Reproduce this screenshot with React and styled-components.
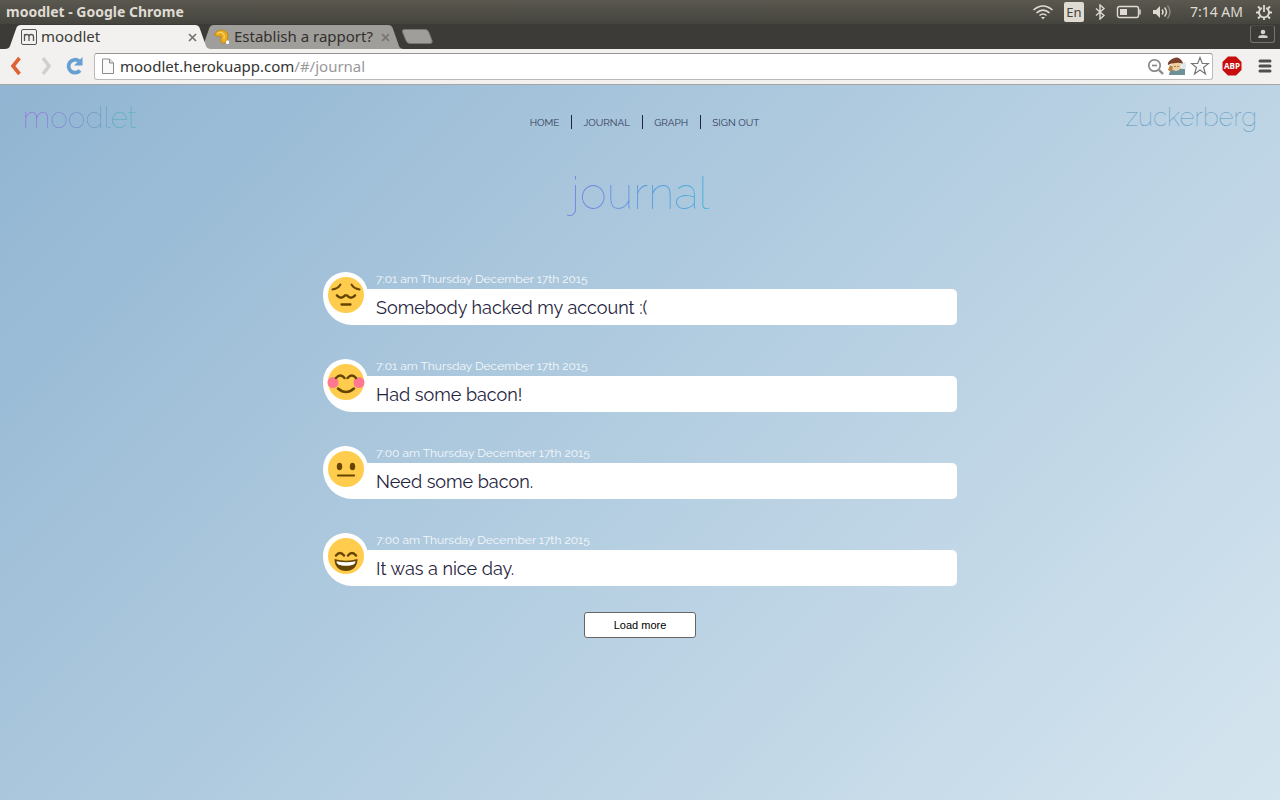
import React from "react";
import styled, { createGlobalStyle } from "styled-components";

const Global = createGlobalStyle`
  *, *::before, *::after { box-sizing: border-box; }
  body { margin: 0; font-family: "Open Sans", "Noto Sans", sans-serif; background: #d4e4ee; }
  button, input { font-family: inherit; }
`;

const ui = `"Noto Sans", "Open Sans", sans-serif`;
const display = `Raleway, Lato, sans-serif`;

const Window = styled.div`
  min-height: 100vh;
  display: flex;
  flex-direction: column;
`;

const TitleBar = styled.header`
  display: flex;
  align-items: center;
  height: 24px;
  padding: 0 8px 0 6px;
  background: linear-gradient(#5a584f, #45443e);
  color: #dfdbd2;
  font: 14px/24px ${ui};
`;

const WindowTitle = styled.strong`
  flex: 1;
  font-size: 14px;
  font-weight: 700;
`;

const Tray = styled.div`
  display: flex;
  align-items: center;
  gap: 10px;
`;

const Lang = styled.span`
  width: 20px;
  height: 20px;
  border-radius: 2px;
  background: #dfdbd2;
  color: #45443e;
  font-size: 13px;
  line-height: 20px;
  text-align: center;
`;

const Clock = styled.time`
  margin: 0 3px 0 8px;
  font-size: 14px;
`;

const TabStrip = styled.div`
  display: flex;
  height: 25px;
  padding: 0 5px;
  background: #3c3b37;
`;

const Tab = styled.div`
  position: relative;
  z-index: ${(p) => (p.$active ? 1 : 0)};
  display: flex;
  align-items: center;
  width: 206px;
  height: 24px;
  margin-top: 1px;
  margin-right: -13px;
  padding: 0 14px 0 16px;
  color: ${(p) => (p.$active ? "#3c3b37" : "#33302d")};
  font: 15px/24px ${ui};
`;

const TabShape = styled.svg`
  position: absolute;
  inset: 0;
  z-index: -1;
  width: 100%;
  height: 100%;
`;

const TabLabel = styled.span`
  flex: 1;
  margin-left: 4px;
  line-height: 22px;
  padding-bottom: 2px;
  white-space: nowrap;
`;

const IconButton = styled.button`
  display: flex;
  align-items: center;
  justify-content: center;
  padding: 0;
  border: 0;
  background: none;
`;

const NewTab = styled(IconButton)`
  align-self: center;
  margin-left: 10px;
`;

const UserButton = styled(IconButton)`
  width: 25px;
  height: 18px;
  margin: 1px 0 0 auto;
  border: 1px solid #77756c;
  border-top-color: #4a4944;
  border-radius: 3px;
`;

const Toolbar = styled.div`
  display: flex;
  align-items: center;
  height: 36px;
  padding: 0 8px 1px;
  border-bottom: 1px solid #a5a5a3;
  background: #f2f1f0;
`;

const NavButtons = styled.div`
  display: flex;
  align-items: center;
  gap: 10px;
  margin-right: 10px;
`;

const AddressBar = styled.div`
  flex: 1;
  display: flex;
  align-items: center;
  gap: 2px;
  height: 27px;
  padding: 0 2px 0 6px;
  border: 1px solid #bcbab8;
  border-top-color: #979593;
  border-radius: 3px;
  background: #fff;
`;

const Url = styled.a`
  flex: 1;
  margin-left: 3px;
  color: #333;
  font: 15px/24px ${ui};
  text-decoration: none;
`;

const UrlPath = styled.span`
  color: #999;
`;

const ToolButtons = styled.div`
  display: flex;
  align-items: center;
  gap: 16px;
  margin-left: 9px;
`;

const Page = styled.main`
  flex: 1;
  padding-bottom: 40px;
  background: linear-gradient(135deg, #91b5d2, #d5e5ef);
  color: #1f2440;
  font-family: ${display};
`;

const Masthead = styled.div`
  display: grid;
  grid-template-columns: 1fr auto 1fr;
  padding: 14px 23px 0;
`;

const GradientText = styled.span`
  padding: 0 4px;
  margin: 0 -4px;
  background: linear-gradient(90deg, ${(p) => p.$from}, ${(p) => p.$to});
  background-clip: text;
  color: transparent;
`;

const Brand = styled.a`
  justify-self: start;
  font-size: 30px;
  font-weight: 100;
  line-height: 38px;
  text-decoration: none;
`;

const UserName = styled.a`
  justify-self: end;
  color: #5c98bf;
  font-size: 26px;
  font-weight: 100;
  line-height: 36px;
  text-decoration: none;
`;

const Nav = styled.nav`
  display: flex;
  align-self: start;
  margin-top: 16px;
  padding-left: 10px;
`;

const NavLink = styled.a`
  padding: 2px 12px 0 11px;
  border-left: 1px solid #1f2440;
  color: #343b58;
  font: 10px/12px ${display};
  text-decoration: none;
  &:first-child { border-left: 0; }
`;

const Heading = styled.h1`
  margin: 27px 0 0;
  font-size: 46px;
  font-weight: 100;
  line-height: 58px;
  text-align: center;
`;

const Entries = styled.ul`
  display: grid;
  gap: 34px;
  width: 50%;
  min-width: 480px;
  margin: 50px auto 0;
  padding: 0 3px;
  list-style: none;
`;

const Entry = styled.li`
  display: grid;
  grid-template-columns: 53px 1fr;
  grid-template-rows: 17px 36px;
`;

const MoodBubble = styled.div`
  z-index: 1;
  grid-row: 1 / 3;
  grid-column: 1;
  width: 45px;
  height: 53px;
  padding: 4px 0 0 4px;
  border-radius: 23px 23px 0 30px;
  background: #fff;
`;

const Stamp = styled.time`
  grid-row: 1;
  grid-column: 2;
  color: #f4f8fb;
  font-size: 12px;
  line-height: 15px;
`;

const Message = styled.p`
  grid-row: 2;
  grid-column: 1 / 3;
  margin: 0 0 0 30px;
  padding: 2px 8px 0 23px;
  border-radius: 0 5px 5px 0;
  background: #fff;
  font-size: 18px;
  line-height: 34px;
`;

const LoadMore = styled.button`
  display: block;
  width: 112px;
  height: 26px;
  margin: 26px auto 0;
  padding: 0;
  border: 1px solid #666;
  border-radius: 3px;
  background: #fff;
  color: #000;
  font: 11px "Liberation Sans", Arial, sans-serif;
`;

const entries = [
  { mood: "sad", time: "7:01 am Thursday December 17th 2015", text: "Somebody hacked my account :(" },
  { mood: "blush", time: "7:01 am Thursday December 17th 2015", text: "Had some bacon!" },
  { mood: "neutral", time: "7:00 am Thursday December 17th 2015", text: "Need some bacon." },
  { mood: "grin", time: "7:00 am Thursday December 17th 2015", text: "It was a nice day." },
];

const faces = {
  sad: (
    <g fill="none" stroke="#664500" strokeLinecap="round">
      <path d="M5.500 13.500q6-1 8-5M32.500 13.500q-6-1-8-5" strokeWidth="1.900" />
      <path d="M10 19.500q4 4.500 8 0M20 19.500q4 4.500 8 0" strokeWidth="2.600" />
      <path d="M14.500 28.500h9" strokeWidth="2.300" />
    </g>
  ),
  blush: (
    <>
      <circle cx="6" cy="19.500" r="5.500" fill="#ff7892" />
      <circle cx="32" cy="19.500" r="5.500" fill="#ff7892" />
      <path d="M9 15q4.500-5 8.500 0M20.500 15q4.500-5 8.500 0M11 25.500q8 7 16 0" fill="none" stroke="#664500" strokeWidth="2.500" strokeLinecap="round" />
    </>
  ),
  neutral: (
    <>
      <ellipse cx="12.500" cy="16.500" rx="2.700" ry="3.800" fill="#664500" />
      <ellipse cx="25.500" cy="16.500" rx="2.700" ry="3.800" fill="#664500" />
      <path d="M11 25.500h16" stroke="#664500" strokeWidth="2.200" strokeLinecap="round" />
    </>
  ),
  grin: (
    <>
      <path d="M9 18.500q4-5 8 0M21 18.500q4-5 8 0" fill="none" stroke="#664500" strokeWidth="2.400" strokeLinecap="round" />
      <path d="M7.500 22q11.500 3.500 23 0c0 8-5 12-11.500 12S7.500 30 7.500 22z" fill="#664500" />
      <path d="M9.500 24.300q9.500 2 19 0c0 3-3 4.500-9.500 4.500s-9.500-1.500-9.500-4.500z" fill="#fff" />
    </>
  ),
};

const Face = ({ mood }) => (
  <svg width="38" height="38" viewBox="0 0 38 38" role="img" aria-label={mood}>
    <circle cx="19" cy="19" r="18" fill="#ffcc4d" />
    {faces[mood]}
  </svg>
);

const CloseTab = () => (
  <IconButton aria-label="Close tab">
    <svg width="9" height="9" viewBox="0 0 9 9"><path d="M1 1l7 7M8 1L1 8" stroke="#77736f" strokeWidth="1.700" /></svg>
  </IconButton>
);

const TabBackground = ({ fill }) => (
  <TabShape viewBox="0 0 206 24" preserveAspectRatio="none" aria-hidden="true">
    <path d="M0 24q4 0 5-3l6-17q1-4 5-4h174q4 0 5 4l6 17q1 3 5 3z" fill={fill} />
  </TabShape>
);

export default function App() {
  return (
    <>
      <Global />
      <Window>
        <TitleBar>
          <WindowTitle>moodlet - Google Chrome</WindowTitle>
          <Tray>
            <svg width="22" height="16" viewBox="0 0 22 16" fill="none" stroke="#dfdbd2" strokeWidth="1.600">
              <path d="M1.500 6q9.500-8 19 0M4.500 8.800q6.500-5.500 13 0M7.500 11.500q3.500-3 7 0" /><path d="M9 13h4l-2 2.500z" fill="#dfdbd2" stroke="none" />
            </svg>
            <Lang>En</Lang>
            <svg width="12" height="16" viewBox="0 0 12 16" fill="none" stroke="#dfdbd2" strokeWidth="1.400">
              <path d="M2 4.500l8 7L6 15V1l4 3.500-8 7" />
            </svg>
            <svg width="26" height="14" viewBox="0 0 26 14">
              <rect x="1.500" y="1.500" width="21" height="11" rx="2" fill="none" stroke="#dfdbd2" strokeWidth="1.400" />
              <rect x="4" y="4" width="7" height="6" fill="#dfdbd2" /><path d="M24 4.500v5" stroke="#dfdbd2" strokeWidth="1.500" />
            </svg>
            <svg width="20" height="16" viewBox="0 0 20 16" fill="none" stroke="#dfdbd2" strokeWidth="1.500">
              <path d="M1 6h3l4-4v12l-4-4H1z" fill="#dfdbd2" stroke="none" /><path d="M10 5.500q2 2.500 0 5M12.500 3.500q4 4.500 0 9" /><path d="M15.500 1.500q5 6.500 0 13" stroke="#8b887f" />
            </svg>
            <Clock>7:14 AM</Clock>
            <svg width="16" height="16" viewBox="0 0 16 16" fill="none" stroke="#dfdbd2" strokeWidth="1.800">
              <path d="M5.800 3.900a5 5 0 1 0 4.400 0M8 1v7" /><path d="M2 2.500l2 2M14 2.500l-2 2M0 8.500h3M16 8.500h-3M2 14.500l2-2M14 14.500l-2-2M8 13.500V16" />
            </svg>
          </Tray>
        </TitleBar>

        <TabStrip>
          <Tab $active>
            <TabBackground fill="#f2f1f0" />
            <svg width="16" height="16" viewBox="0 0 16 16" fill="none" stroke="#555">
              <rect x=".5" y=".5" width="15" height="15" rx="1.500" /><path d="M3.500 12V5M3.500 7.500q0-2 2.200-2T8 7.500V12M8 7.500q0-2 2.200-2t2.300 2V12" strokeWidth="1.300" />
            </svg>
            <TabLabel>moodlet</TabLabel>
            <CloseTab />
          </Tab>
          <Tab>
            <TabBackground fill="#a09e9b" />
            <svg width="16" height="16" viewBox="0 0 16 16">
              <path d="M.5 6Q2 1 8 1q6 .5 6 6.500 0 3-1.500 5L10 14.500q-3-.5-4-3.500 1.500-2 1-4Q4 8.500.5 6z" fill="#e9ac20" stroke="#b87c0c" strokeWidth=".7" /><path d="M3 4.500q3-2.500 6-.5 2 2 1 6" stroke="#ffe07a" fill="none" /><rect x="12" y="11.500" width="3" height="3.500" rx="1" fill="#fff" />
            </svg>
            <TabLabel>Establish a rapport?</TabLabel>
            <CloseTab />
          </Tab>
          <NewTab aria-label="New tab">
            <svg width="32" height="15" viewBox="0 0 32 15"><path d="M3 .5h21q3 0 4 3l3 8q1 3-2 3H9q-3 0-4-3L1.500 3Q1 .5 3 .5z" fill="#a09e9b" stroke="#777570" /></svg>
          </NewTab>
          <UserButton aria-label="Profile">
            <svg width="10" height="10" viewBox="0 0 10 10" fill="#d4d1ca"><circle cx="5" cy="3" r="2.300" /><path d="M.5 9V7.500Q1 6 5 6t4.500 1.500V9z" /></svg>
          </UserButton>
        </TabStrip>

        <Toolbar>
          <NavButtons>
            <IconButton aria-label="Back"><svg width="15" height="20" viewBox="0 0 15 20"><path d="M11.500 2L5 10l6.500 8" fill="none" stroke="#df6232" strokeWidth="3.600" /></svg></IconButton>
            <IconButton aria-label="Forward"><svg width="22" height="20" viewBox="0 0 22 20"><path d="M10 2l6 8-6 8" fill="none" stroke="#d2d0ce" strokeWidth="3.600" /></svg></IconButton>
            <IconButton aria-label="Reload"><svg width="19" height="20" viewBox="0 0 19 20"><path d="M15 14.500A6.500 6.500 0 1 1 14 5" fill="none" stroke="#659fd4" strokeWidth="3.800" /><path d="M17.500 1v8.500H9z" fill="#659fd4" /></svg></IconButton>
          </NavButtons>
          <AddressBar>
            <svg width="14" height="16" viewBox="0 0 14 16"><path d="M1.500 1h7l4 4v10.500h-11z" fill="#fafafa" stroke="#8b8b8b" /><path d="M8.500 1v4h4" fill="#ddd" stroke="#8b8b8b" /></svg>
            <Url href="#/journal">moodlet.herokuapp.com<UrlPath>/#/journal</UrlPath></Url>
            <IconButton aria-label="Zoom"><svg width="17" height="17" viewBox="0 0 17 17" fill="none" stroke="#8a8a8a" strokeWidth="1.700"><circle cx="7.500" cy="7.500" r="5.700" /><path d="M5 7.500h5" /><path d="M12 12l4 4" strokeWidth="2.400" /></svg></IconButton>
            <IconButton aria-label="Extension">
              <svg width="22" height="20" viewBox="0 0 22 20"><path d="M3 19q0-6 7-7l9 1v6z" fill="#6d9199" /><circle cx="10" cy="10" r="5" fill="#f0cf9d" /><path d="M2 9q-1-3 4-6 6-4 10 2l2 4q-4-3-8-2-5 0-8 2z" fill="#79402b" /><path d="M4 9l3 2-2 5-3-2z" fill="#bb8140" /><path d="M15 8l5-2v7l-4-1z" fill="#dce9ed" /><path d="M9 10v1M12 10v1" stroke="#333" /></svg>
            </IconButton>
            <IconButton aria-label="Bookmark"><svg width="20" height="20" viewBox="0 0 20 20"><path d="M10 1.500l2.300 6h6.200l-5 4 2 6.500-5.500-4-5.500 4 2-6.500-5-4h6.200z" fill="#fff" stroke="#777" strokeWidth="1.200" /></svg></IconButton>
          </AddressBar>
          <ToolButtons>
            <IconButton aria-label="Adblock Plus">
              <svg width="20" height="20" viewBox="0 0 20 20"><path d="M6 .5h8L19.500 6v8L14 19.500H6L.5 14V6z" fill="#c70d0d" /><text x="10" y="13" textAnchor="middle" fill="#fff" fontFamily="Open Sans, sans-serif" fontSize="8" fontWeight="700">ABP</text></svg>
            </IconButton>
            <IconButton aria-label="Menu"><svg width="14" height="14" viewBox="0 0 14 14" stroke="#4f4f4f" strokeWidth="3" strokeLinecap="round"><path d="M2 2h10M2 7h10M2 12h10" /></svg></IconButton>
          </ToolButtons>
        </Toolbar>

        <Page>
          <Masthead>
            <Brand href="#/"><GradientText $from="#a05ae0" $to="#3bbbb0">moodlet</GradientText></Brand>
            <Nav>
              <NavLink href="#/">HOME</NavLink>
              <NavLink href="#/journal">JOURNAL</NavLink>
              <NavLink href="#/graph">GRAPH</NavLink>
              <NavLink href="#/signout">SIGN OUT</NavLink>
            </Nav>
            <UserName href="#/user">zuckerberg</UserName>
          </Masthead>
          <Heading><GradientText $from="#7a7fe0" $to="#3fb0dc">journal</GradientText></Heading>
          <Entries>
            {entries.map((e) => (
              <Entry key={e.text}>
                <MoodBubble><Face mood={e.mood} /></MoodBubble>
                <Stamp>{e.time}</Stamp>
                <Message>{e.text}</Message>
              </Entry>
            ))}
          </Entries>
          <LoadMore>Load more</LoadMore>
        </Page>
      </Window>
    </>
  );
}
